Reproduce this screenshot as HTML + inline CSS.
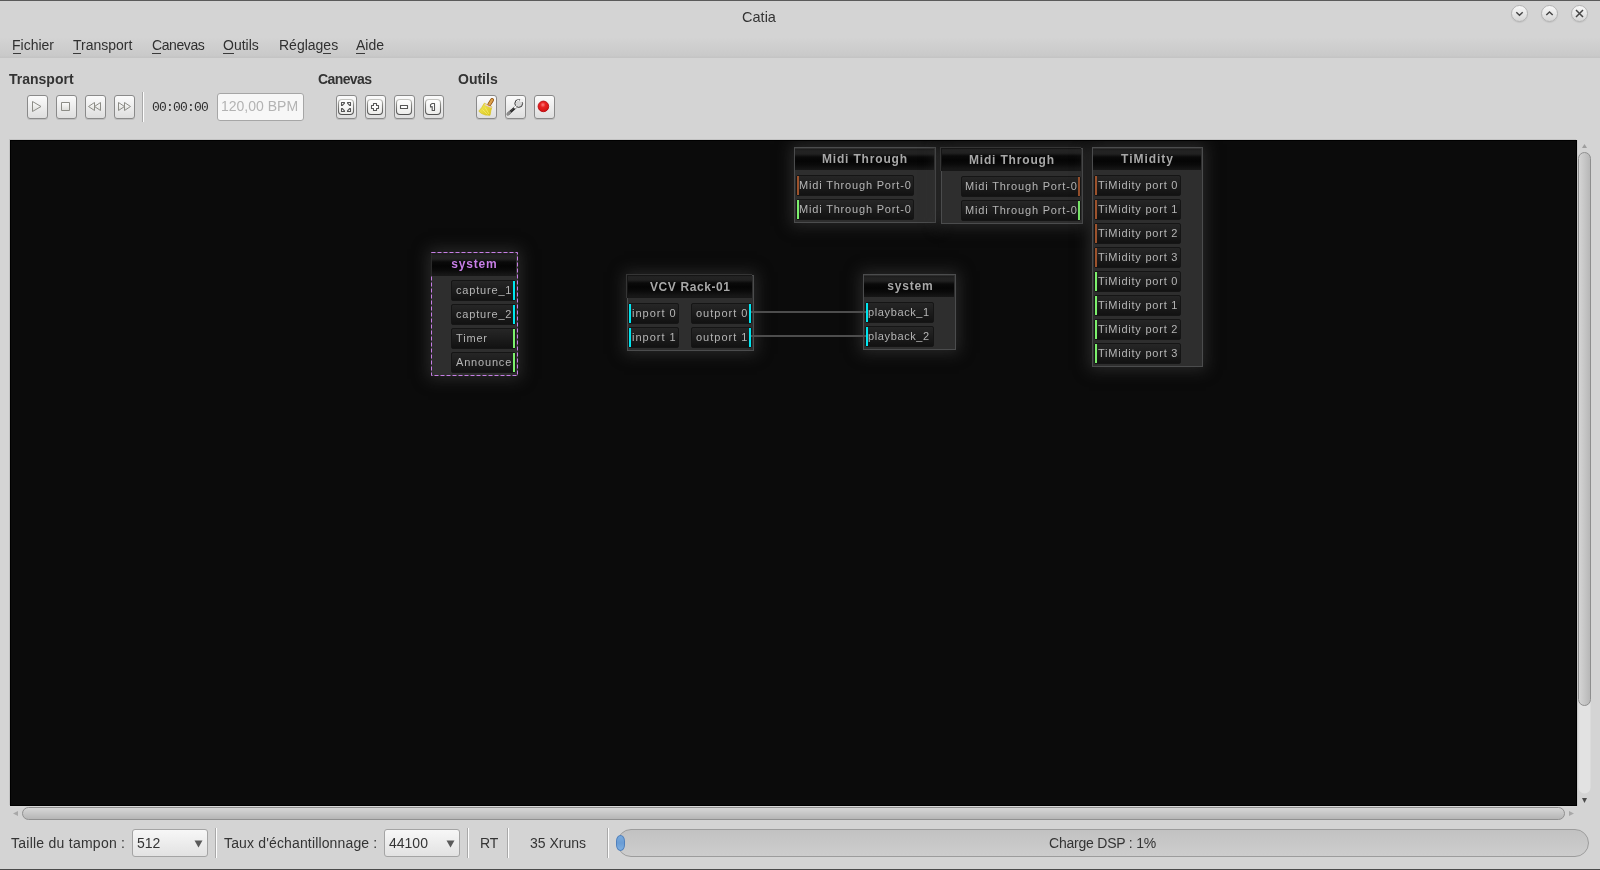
<!DOCTYPE html>
<html><head><meta charset="utf-8">
<style>
*{margin:0;padding:0;box-sizing:border-box}
html,body{width:1600px;height:870px;overflow:hidden}
body{position:relative;background:#d4d4d4;font-family:"Liberation Sans",sans-serif;color:#333}
.a{position:absolute;will-change:transform}
#topline{left:0;top:0;width:1600px;height:1px;background:#5a5a5a}
#botline{left:0;top:869px;width:1600px;height:1px;background:#4a4a4a}
#title{left:0;top:9px;width:1518px;text-align:center;font-size:14.5px;color:#333;line-height:17px}
.wb{width:17px;height:17px;border-radius:50%;background:linear-gradient(#f8f8f8,#d6d6d6);border:1px solid #b2b2b2;box-shadow:0 1px 1px rgba(0,0,0,.08)}
#menubar{left:0;top:30px;width:1600px;height:28px;background:linear-gradient(#d4d4d4 0px,#d4d4d4 7px,#c9c9c9 26px,#c4c4c4 27px)}
.mi{top:37px;font-size:14px;color:#303030;line-height:17px}
.ul{height:1px;background:#3a3a3a;top:53px}
.tl{font-weight:bold;font-size:14px;color:#333;line-height:17px;top:71px}
.tb{top:95px;width:21px;height:24px;border:1px solid #8a8a8a;border-radius:3px;background:linear-gradient(#fbfbfb,#dedede);box-shadow:0 1px 0 rgba(0,0,0,.1)}
#canvas{left:10px;top:140px;width:1567px;height:666px;background:#0b0b0b;border:1px solid #000;box-shadow:-1px -1px 0 0 #c2c2c2,1px 0 0 0 #c8c8c8,0 1px 0 0 #d8d8d8}
.grp{background:#2e2e2e;border:1px solid #4b4c4d;box-shadow:0 0 14px 3px rgba(48,48,48,.8)}
.hdr{background:linear-gradient(#1c1c1c 0px,#232323 2px,#212121 5px,#0a0a0a 8px,#050505 12px,#0a0a0a 16px,#171717 21px)}
.ht{font-weight:bold;font-size:12px;color:#a8a8a8;line-height:13px;letter-spacing:1.2px;white-space:nowrap}
.port{border-radius:2px;background:linear-gradient(#262626,#121212);border:1px solid #151515}
.pt{font-size:11px;color:#b5b5b5;line-height:13px;letter-spacing:.68px;white-space:nowrap}
.bar{width:2px}
.cy{background:#00e6f0}
.gr{background:#7cf06c}
.or{background:#9c522c}
.sep{width:2px;border-left:1px solid #a9a9a9;border-right:1px solid #fdfdfd}
.sl{font-size:14px;color:#343434;line-height:17px;top:835px}
.combo{top:829px;height:28px;border:1px solid #a4a4a4;border-radius:3px;background:linear-gradient(#f7f7f7,#e2e2e2)}
</style></head><body>
<div class="a" id="topline"></div>
<div class="a" id="title">Catia</div>
<div class="a wb" style="left:1511px;top:5px"></div>
<div class="a wb" style="left:1541px;top:5px"></div>
<div class="a wb" style="left:1571px;top:5px"></div>
<svg class="a" style="left:1500px;top:0" width="100" height="30">
<path d="M1516.3 12.3 L1519.5 15.3 L1522.7 12.3" transform="translate(-1500 0)" fill="none" stroke="#454545" stroke-width="1.45"/>
<path d="M1546.3 15 L1549.5 12 L1552.7 15" transform="translate(-1500 0)" fill="none" stroke="#454545" stroke-width="1.45"/>
<path d="M1576 10 L1583 17 M1583 10 L1576 17" transform="translate(-1500 0)" fill="none" stroke="#454545" stroke-width="1.5"/>
</svg>

<div class="a" id="menubar"></div>
<div class="a mi" style="left:12px">Fichier</div>
<div class="a mi" style="left:73px">Transport</div>
<div class="a mi" style="left:152px;letter-spacing:-0.4px">Canevas</div>
<div class="a mi" style="left:223px">Outils</div>
<div class="a mi" style="left:279px">Réglages</div>
<div class="a mi" style="left:356px">Aide</div>
<div class="a ul" style="left:13px;width:8px"></div>
<div class="a ul" style="left:73px;width:8px"></div>
<div class="a ul" style="left:152px;width:9px"></div>
<div class="a ul" style="left:223px;width:11px"></div>
<div class="a ul" style="left:323px;width:8px"></div>
<div class="a ul" style="left:356px;width:9px"></div>

<div class="a tl" style="left:9px">Transport</div>
<div class="a tl" style="left:318px;letter-spacing:-0.6px">Canevas</div>
<div class="a tl" style="left:458px">Outils</div>

<div class="a tb" style="left:27px"></div>
<div class="a tb" style="left:56px"></div>
<div class="a tb" style="left:85px"></div>
<div class="a tb" style="left:114px"></div>
<div class="a sep" style="left:142px;top:92px;height:30px"></div>
<div class="a" style="left:152px;top:101px;font-family:'Liberation Mono',monospace;font-size:13px;letter-spacing:-0.8px;color:#2e2e2e;line-height:14px">00:00:00</div>
<div class="a" style="left:217px;top:93px;width:87px;height:28px;background:#f7f7f7;border:1px solid #a6a6a6;border-radius:3px"></div>
<div class="a" style="left:221px;top:98px;font-size:14px;color:#b3b3b3;line-height:17px">120,00 BPM</div>

<div class="a tb" style="left:336px"></div>
<div class="a tb" style="left:365px"></div>
<div class="a tb" style="left:394px"></div>
<div class="a tb" style="left:423px"></div>

<div class="a tb" style="left:476px"></div>
<div class="a tb" style="left:505px"></div>
<div class="a tb" style="left:534px"></div>

<svg class="a" style="left:0;top:0" width="600" height="130">
<defs>
<linearGradient id="ig" x1="0" y1="0" x2="0" y2="1"><stop offset="0" stop-color="#fdfdfd"/><stop offset="1" stop-color="#dcdcd8"/></linearGradient>
<linearGradient id="ks" x1="0" y1="0" x2="0" y2="1"><stop offset="0" stop-color="#c4c4c0"/><stop offset="0.35" stop-color="#8a8a86"/><stop offset="1" stop-color="#505050"/></linearGradient>
<linearGradient id="kf" x1="0" y1="0" x2="0" y2="1"><stop offset="0" stop-color="#ffffff"/><stop offset="1" stop-color="#ececea"/></linearGradient>
<radialGradient id="rec" cx="0.45" cy="0.35" r="0.7"><stop offset="0" stop-color="#ff8080"/><stop offset="0.35" stop-color="#e82222"/><stop offset="1" stop-color="#d01010"/></radialGradient>
<linearGradient id="brm" x1="0" y1="0" x2="1" y2="1"><stop offset="0" stop-color="#f4ea60"/><stop offset="1" stop-color="#d8c418"/></linearGradient>
</defs>
<g stroke="#8c8c86" stroke-width="1" fill="url(#ig)" stroke-linejoin="round">
<path d="M32.5 101.5 L41 106.5 L32.5 111.5 Z"/>
<rect x="61.5" y="102.5" width="8" height="8"/>
<path d="M88.5 106.5 L94.5 102.5 V110.5 Z M94.5 106.5 L100.5 102.5 V110.5 Z"/>
<path d="M118.5 102.5 L124.5 106.5 L118.5 110.5 Z M124.5 102.5 L130.5 106.5 L124.5 110.5 Z"/>
</g>
<g stroke="url(#ks)" stroke-width="1.1" fill="url(#kf)">
<rect x="338.5" y="99.5" width="15" height="15" rx="3.5"/>
<rect x="367.5" y="99.5" width="15" height="15" rx="3.5"/>
<rect x="396.5" y="99.5" width="15" height="15" rx="3.5"/>
<rect x="425.5" y="99.5" width="15" height="15" rx="3.5"/>
</g>
<g stroke="#555" stroke-width="1.1" fill="#fff" stroke-linejoin="round">
<path d="M341.5 105.5 V102.5 H344.5 V103.2 L342.2 105.5 Z"/>
<path d="M350.5 105.5 V102.5 H347.5 V103.2 L349.8 105.5 Z"/>
<path d="M341.5 108.5 V111.5 H344.5 V110.8 L342.2 108.5 Z"/>
<path d="M350.5 108.5 V111.5 H347.5 V110.8 L349.8 108.5 Z"/>
<path d="M373.5 103.5 H376.5 V105.5 H378.5 V108.5 H376.5 V110.5 H373.5 V108.5 H371.5 V105.5 H373.5 Z"/>
<rect x="400.5" y="105.5" width="7" height="3"/>
<path d="M432.2 103.5 H434.5 V110.5 H432.2 V106.6 L430.5 107 V104.6 Z"/>
</g>
<circle cx="543.4" cy="106.4" r="5.3" fill="url(#rec)" stroke="#b80a10" stroke-width="0.9"/>
<defs><linearGradient id="hdl" x1="0" y1="0" x2="1" y2="0"><stop offset="0" stop-color="#a86418"/><stop offset="0.5" stop-color="#e0a850"/><stop offset="1" stop-color="#9a5810"/></linearGradient></defs>
<path d="M484.3 103.2 L491.9 106.8 L490.9 110.5 L490 115.3 L485.5 115 L481.5 113.5 L478.8 111.2 L481.8 107.5 Z" fill="url(#brm)" stroke="#d6c020" stroke-width="0.7" stroke-linejoin="round"/>
<path d="M482.5 109.5 L487.5 114.5 M485.2 107.5 L489 114" stroke="#fff680" stroke-width="0.7" opacity="0.8"/>
<path d="M492.1 99.9 L489.4 104.3" stroke="#8a4c0c" stroke-width="3.8" stroke-linecap="round"/>
<path d="M492.1 99.9 L489.4 104.3" stroke="#dca04a" stroke-width="2.4" stroke-linecap="round"/>
<path d="M484.8 104.4 L491.6 107.6" stroke="#e8c8e0" stroke-width="1.1"/>
<path d="M508.3 113.8 L515.2 107.4" stroke="#262626" stroke-width="2.7" stroke-linecap="round"/>
<path d="M507.8 114.3 L509.6 112.6" stroke="#8c8c8c" stroke-width="2.9" stroke-linecap="round"/>
<path d="M509.6 112.1 L513.6 108.4" stroke="#6a6a6a" stroke-width="0.6"/>
<circle cx="518.7" cy="103.5" r="3.9" fill="#d6d6d6" stroke="#3a3a3a" stroke-width="1"/>
<circle cx="521.7" cy="100.6" r="1.9" fill="#efefef"/>
<path d="M514.3 108.1 L516.2 106.2" stroke="#f6f6f6" stroke-width="2.2"/>
<path d="M516.4 101.5 A3 3 0 0 1 519 100.2" stroke="#fff" stroke-width="1" fill="none"/>
</svg>
<div class="a" id="canvas"></div>
<div style="position:absolute;left:11px;top:141px;width:1565px;height:664px;overflow:hidden"><div style="position:absolute;left:-11px;top:-141px;width:1600px;height:870px">
<div class="a grp" style="left:431px;top:252px;width:87px;height:124px;border-color:transparent"></div>
<svg class="a" style="left:431px;top:252px" width="87" height="124"><rect x="0.5" y="0.5" width="86" height="123" fill="none" stroke="#c77ee6" stroke-width="1" stroke-dasharray="4 2"/></svg>
<div class="a hdr" style="left:431px;top:253px;width:85px;height:23px;border-left:1px solid #2a2a2a;border-top:1px solid #1e1e1e"></div>
<div class="a ht" style="left:432px;top:258px;width:84px;text-align:center;letter-spacing:0.8px;padding-left:0.8px;color:#c77ee6">system</div>
<div class="a port" style="left:451px;top:280px;width:65px;height:21px"></div>
<div class="a bar cy" style="left:513px;top:281px;height:19px"></div>
<div class="a pt" style="left:455.6px;top:284px;letter-spacing:0.82px">capture_1</div>
<div class="a port" style="left:451px;top:304px;width:65px;height:21px"></div>
<div class="a bar cy" style="left:513px;top:305px;height:19px"></div>
<div class="a pt" style="left:455.6px;top:308px;letter-spacing:0.82px">capture_2</div>
<div class="a port" style="left:451px;top:328px;width:65px;height:21px"></div>
<div class="a bar gr" style="left:513px;top:329px;height:19px"></div>
<div class="a pt" style="left:455.6px;top:332px;letter-spacing:0.82px">Timer</div>
<div class="a port" style="left:451px;top:352px;width:65px;height:21px"></div>
<div class="a bar gr" style="left:513px;top:353px;height:19px"></div>
<div class="a pt" style="left:455.6px;top:356px;letter-spacing:0.82px">Announce</div>
<div class="a grp" style="left:627px;top:275px;width:127px;height:76px"></div>
<div class="a hdr" style="left:626px;top:274px;width:126px;height:24px;border-top:1px solid #353535;border-left:1px solid #353535;box-shadow:inset 1px 1px 0 #151515"></div>
<div class="a ht" style="left:628px;top:281px;width:124px;text-align:center;letter-spacing:0.6px;padding-left:0.6px">VCV Rack-01</div>
<div class="a port" style="left:628px;top:303px;width:51px;height:21px"></div>
<div class="a bar cy" style="left:629px;top:304px;height:19px"></div>
<div class="a pt" style="left:631.5px;top:307px;letter-spacing:1.0px">inport 0</div>
<div class="a port" style="left:628px;top:327px;width:51px;height:21px"></div>
<div class="a bar cy" style="left:629px;top:328px;height:19px"></div>
<div class="a pt" style="left:631.5px;top:331px;letter-spacing:1.0px">inport 1</div>
<div class="a port" style="left:691px;top:303px;width:61px;height:21px"></div>
<div class="a bar cy" style="left:749px;top:304px;height:19px"></div>
<div class="a pt" style="left:695.5px;top:307px;letter-spacing:1.0px">outport 0</div>
<div class="a port" style="left:691px;top:327px;width:61px;height:21px"></div>
<div class="a bar cy" style="left:749px;top:328px;height:19px"></div>
<div class="a pt" style="left:695.5px;top:331px;letter-spacing:1.0px">outport 1</div>
<div class="a grp" style="left:863px;top:274px;width:93px;height:76px"></div>
<div class="a hdr" style="left:864px;top:276px;width:90px;height:21px"></div>
<div class="a ht" style="left:865px;top:280px;width:90px;text-align:center;letter-spacing:0.8px;padding-left:0.8px">system</div>
<div class="a port" style="left:865px;top:302px;width:69px;height:21px"></div>
<div class="a bar cy" style="left:866px;top:303px;height:19px"></div>
<div class="a pt" style="left:867.5px;top:306px;letter-spacing:0.62px">playback_1</div>
<div class="a port" style="left:865px;top:326px;width:69px;height:21px"></div>
<div class="a bar cy" style="left:866px;top:327px;height:19px"></div>
<div class="a pt" style="left:867.5px;top:330px;letter-spacing:0.62px">playback_2</div>
<div class="a grp" style="left:794px;top:147px;width:142px;height:76px"></div>
<div class="a hdr" style="left:795px;top:149px;width:139px;height:21px"></div>
<div class="a ht" style="left:795px;top:153px;width:139px;text-align:center;letter-spacing:0.83px;padding-left:0.83px">Midi Through</div>
<div class="a port" style="left:796px;top:175px;width:118px;height:21px"></div>
<div class="a bar or" style="left:797px;top:176px;height:19px"></div>
<div class="a pt" style="left:798.5px;top:179px;letter-spacing:0.82px">Midi Through Port-0</div>
<div class="a port" style="left:796px;top:199px;width:118px;height:21px"></div>
<div class="a bar gr" style="left:797px;top:200px;height:19px"></div>
<div class="a pt" style="left:798.5px;top:203px;letter-spacing:0.82px">Midi Through Port-0</div>
<div class="a grp" style="left:941px;top:148px;width:142px;height:76px"></div>
<div class="a hdr" style="left:940px;top:147px;width:141px;height:24px;border-top:1px solid #353535;border-left:1px solid #353535;box-shadow:inset 1px 1px 0 #151515"></div>
<div class="a ht" style="left:942px;top:154px;width:139px;text-align:center;letter-spacing:0.83px;padding-left:0.83px">Midi Through</div>
<div class="a port" style="left:961px;top:176px;width:120px;height:21px"></div>
<div class="a bar or" style="left:1078px;top:177px;height:19px"></div>
<div class="a pt" style="left:965.4px;top:180px;letter-spacing:0.82px">Midi Through Port-0</div>
<div class="a port" style="left:961px;top:200px;width:120px;height:21px"></div>
<div class="a bar gr" style="left:1078px;top:201px;height:19px"></div>
<div class="a pt" style="left:965.4px;top:204px;letter-spacing:0.82px">Midi Through Port-0</div>
<div class="a grp" style="left:1092px;top:147px;width:111px;height:220px"></div>
<div class="a hdr" style="left:1093px;top:149px;width:108px;height:21px"></div>
<div class="a ht" style="left:1093px;top:153px;width:108px;text-align:center;letter-spacing:0.97px;padding-left:0.97px">TiMidity</div>
<div class="a port" style="left:1094px;top:175px;width:87px;height:21px"></div>
<div class="a bar or" style="left:1095px;top:176px;height:19px"></div>
<div class="a pt" style="left:1097.7px;top:179px;letter-spacing:0.77px">TiMidity port 0</div>
<div class="a port" style="left:1094px;top:199px;width:87px;height:21px"></div>
<div class="a bar or" style="left:1095px;top:200px;height:19px"></div>
<div class="a pt" style="left:1097.7px;top:203px;letter-spacing:0.77px">TiMidity port 1</div>
<div class="a port" style="left:1094px;top:223px;width:87px;height:21px"></div>
<div class="a bar or" style="left:1095px;top:224px;height:19px"></div>
<div class="a pt" style="left:1097.7px;top:227px;letter-spacing:0.77px">TiMidity port 2</div>
<div class="a port" style="left:1094px;top:247px;width:87px;height:21px"></div>
<div class="a bar or" style="left:1095px;top:248px;height:19px"></div>
<div class="a pt" style="left:1097.7px;top:251px;letter-spacing:0.77px">TiMidity port 3</div>
<div class="a port" style="left:1094px;top:271px;width:87px;height:21px"></div>
<div class="a bar gr" style="left:1095px;top:272px;height:19px"></div>
<div class="a pt" style="left:1097.7px;top:275px;letter-spacing:0.77px">TiMidity port 0</div>
<div class="a port" style="left:1094px;top:295px;width:87px;height:21px"></div>
<div class="a bar gr" style="left:1095px;top:296px;height:19px"></div>
<div class="a pt" style="left:1097.7px;top:299px;letter-spacing:0.77px">TiMidity port 1</div>
<div class="a port" style="left:1094px;top:319px;width:87px;height:21px"></div>
<div class="a bar gr" style="left:1095px;top:320px;height:19px"></div>
<div class="a pt" style="left:1097.7px;top:323px;letter-spacing:0.77px">TiMidity port 2</div>
<div class="a port" style="left:1094px;top:343px;width:87px;height:21px"></div>
<div class="a bar gr" style="left:1095px;top:344px;height:19px"></div>
<div class="a pt" style="left:1097.7px;top:347px;letter-spacing:0.77px">TiMidity port 3</div>
<svg class="a" style="left:740px;top:300px" width="140" height="50"><path d="M11 12 H126 M11 36 H126" stroke="#4d4d4d" stroke-width="2" fill="none"/></svg>
</div></div>

<svg class="a" style="left:0;top:130px" width="1600" height="740">
<defs>
<linearGradient id="vh" x1="0" y1="0" x2="1" y2="0"><stop offset="0" stop-color="#d6d6d6"/><stop offset="1" stop-color="#b6b6b6"/></linearGradient>
<linearGradient id="hh" x1="0" y1="0" x2="0" y2="1"><stop offset="0" stop-color="#d8d8d8"/><stop offset="1" stop-color="#b4b4b4"/></linearGradient>
<linearGradient id="cb" x1="0" y1="0" x2="0" y2="1"><stop offset="0" stop-color="#c0c0c0"/><stop offset="0.5" stop-color="#c6c6c6"/><stop offset="1" stop-color="#cfcfcf"/></linearGradient>
</defs>
<g transform="translate(0 -130)">
<rect x="1578.5" y="152.5" width="12" height="641" rx="6" fill="#e2e2e2"/>
<rect x="1578.5" y="152.5" width="12" height="553" rx="6" fill="url(#vh)" stroke="#8e8e8e"/>
<path d="M1582 148 L1584.5 144 L1587 148 Z" fill="#9e9e9e"/>
<path d="M1582 798 L1584.5 803 L1587 798 Z" fill="#4a4a4a"/>
<rect x="22.5" y="807.5" width="1542" height="12" rx="6" fill="url(#hh)" stroke="#909090"/>
<path d="M18 811 L13 813.5 L18 816 Z" fill="#a8a8a8"/>
<path d="M1569 811 L1574 813.5 L1569 816 Z" fill="#a8a8a8"/>
</g>
</svg>
<!-- status bar -->
<div class="a sl" style="left:11px;letter-spacing:0.25px">Taille du tampon :</div>
<div class="a combo" style="left:132px;width:76px"></div>
<div class="a sl" style="left:137px">512</div>
<div class="a sep" style="left:215px;top:828px;height:30px"></div>
<div class="a sl" style="left:224px;letter-spacing:0.15px">Taux d'échantillonnage :</div>
<div class="a combo" style="left:384px;width:76px"></div>
<div class="a sl" style="left:389px">44100</div>
<div class="a sep" style="left:467px;top:828px;height:30px"></div>
<div class="a sl" style="left:480px">RT</div>
<div class="a sep" style="left:507px;top:828px;height:30px"></div>
<div class="a sl" style="left:530px">35 Xruns</div>
<div class="a sep" style="left:607px;top:828px;height:30px"></div>
<div class="a" style="left:617px;top:829px;width:972px;height:28px;border:1px solid #9c9c9c;border-radius:14px;background:linear-gradient(#c2c2c2,#cdcdcd)"></div>
<div class="a" style="left:616px;top:835px;width:9px;height:16px;border:1px solid #4f80bd;border-radius:4.5px/6px;background:linear-gradient(#78a9dc,#6a9cd4 50%,#7fb0e2)"></div>
<div class="a sl" style="left:1049px;letter-spacing:-0.22px">Charge DSP : 1%</div>
<svg class="a" style="left:0;top:830px" width="600" height="30"><g transform="translate(0 -830)" fill="#5a5a5a">
<path d="M194.5 840.5 H202.5 L198.5 847.5 Z"/>
<path d="M446.5 840.5 H454.5 L450.5 847.5 Z"/>
</g></svg>
<div class="a" id="botline"></div>
</body></html>
